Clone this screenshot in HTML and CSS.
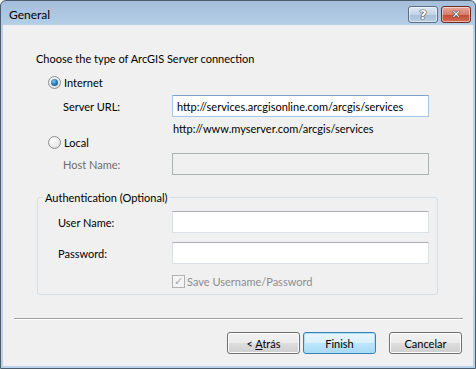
FILE: index.html
```html
<!DOCTYPE html>
<html lang="en">
<head>
    <meta charset="UTF-8">
    <title>General</title>
    <link rel="stylesheet" href="styles.css">
</head>
<body>

<div class="window">
    <div class="titlebar">
        <span class="title">General</span>
        <div class="caption-buttons">
            <button class="cap-btn help">?</button>
            <button class="cap-btn close">&#x2715;</button>
        </div>
    </div>

    <div class="client">
        <div class="page">
            <p class="intro">Choose the type of ArcGIS Server connection</p>

            <label class="radio-row first">
                <span class="radio checked"></span>
                <span>Internet</span>
            </label>
            <div class="field-row">
                <span class="field-label">Server URL:</span>
                <input class="textbox focused" type="text" value="http://services.arcgisonline.com/arcgis/services">
            </div>
            <div class="hint">http://www.myserver.com/arcgis/services</div>

            <label class="radio-row">
                <span class="radio"></span>
                <span>Local</span>
            </label>
            <div class="field-row host-row">
                <span class="field-label disabled">Host Name:</span>
                <input class="textbox" type="text" disabled>
            </div>

            <fieldset class="group">
                <legend>Authentication (Optional)</legend>
                <div class="field-row">
                    <span class="field-label">User Name:</span>
                    <input class="textbox" type="text">
                </div>
                <div class="field-row">
                    <span class="field-label">Password:</span>
                    <input class="textbox" type="password">
                </div>
                <div class="check-row">
                    <span class="checkbox">&#x2713;</span>
                    <span>Save Username/Password</span>
                </div>
            </fieldset>
        </div>

        <div class="separator"></div>

        <div class="buttons">
            <button class="btn">&lt; <u>A</u>trás</button>
            <button class="btn default">Finish</button>
            <button class="btn cancel">Cancelar</button>
        </div>
    </div>
</div>

</body>
</html>
```

FILE: styles.css
```css
body {
    margin: 0;
    font-family: Lato, "Open Sans", sans-serif;
    font-size: 11px;
    color: #000;
    background: #f0f0f0;
}

.window {
    width: 476px;
    height: 369px;
    box-sizing: border-box;
    border: 1px solid #4d5d6e;
    border-radius: 6px 6px 0 0;
    background: linear-gradient(#a4bedb, #bad2ea 30px, #b9d1ea);
    padding: 0 2px 2px 2px;
    display: flex;
    flex-direction: column;
}

.titlebar {
    height: 24px;
    display: flex;
    align-items: center;
    justify-content: space-between;
}

.title {
    margin-left: 6px;
    line-height: 15px;
    margin-top: 2px;
    font-size: 12px;
}

.caption-buttons {
    display: flex;
    gap: 3px;
    margin-right: 2px;
    margin-top: 2px;
}

.cap-btn {
    width: 30px;
    height: 17px;
    padding: 0;
    border: 1px solid #5b6e84;
    border-radius: 3px;
    font-family: "DejaVu Sans", sans-serif;
    font-weight: bold;
    color: #fff;
    line-height: 15px;
    box-shadow: inset 0 0 0 1px rgba(255, 255, 255, 0.5);
}

.help {
    background: linear-gradient(#dfe9f4, #c3d4e8 50%, #a9bfd8 51%, #b7cde3);
    font-size: 13px;
    text-shadow: 0 0 1px #333, 0 0 1px #333, 0 0 1px #333;
}

.close {
    border-color: #6b2a20;
    background: linear-gradient(#e4a99b, #d77e6a 50%, #c24b31 51%, #d36c52);
    font-size: 11px;
    text-shadow: 0 0 1px #222, 0 0 1px #222, 0 0 1px #222;
}

.client {
    flex: 1;
    background: #f0f0f0;
    padding: 0 10px 0 11px;
}

.page {
    padding-left: 22px;
}

.intro {
    margin: 26px 0 0 0;
    line-height: 15px;
}

.radio-row {
    display: flex;
    align-items: center;
    height: 14px;
    margin-left: 12px;
    gap: 3px;
    line-height: 15px;
}

.radio-row.first {
    margin-top: 9px;
}

.radio {
    width: 11px;
    height: 11px;
    border: 1px solid #8e8f8f;
    border-radius: 50%;
    background: radial-gradient(circle at 40% 35%, #ffffff, #e8e8e8 60%, #cfcfcf);
    position: relative;
    flex: none;
}

.radio.checked::after {
    content: "";
    position: absolute;
    left: 2px;
    top: 2px;
    width: 7px;
    height: 7px;
    border-radius: 50%;
    background: radial-gradient(circle at 40% 35%, #7ec6f0, #2a78b5 50%, #0d3f6e);
}

.field-row {
    display: flex;
    align-items: center;
    margin-top: 6px;
    margin-left: 27px;
}

.field-label {
    width: 109px;
    line-height: 15px;
}

.field-label.disabled {
    color: #6d6d6d;
}

.textbox {
    width: 257px;
    height: 22px;
    box-sizing: border-box;
    margin: 0;
    padding: 0 4px;
    border: 1px solid #dbdfe6;
    border-top-color: #abadb3;
    background: #fff;
    font-family: inherit;
    font-size: 11px;
    color: #000;
    outline: none;
}

.textbox.focused {
    border-color: #a9c6e4;
    border-top-color: #7da2ce;
}

.textbox:disabled {
    background: #f0f0f0;
    border-color: #adb2b5;
}

.hint {
    margin: 5px 0 0 137px;
    line-height: 13px;
    height: 13px;
}

.host-row {
    margin-top: 4px;
}

.group {
    width: 401px;
    box-sizing: border-box;
    margin: 15px 0 0 1px;
    padding: 6px 0 6px 5px;
    border: 1px solid #d5dfe5;
    border-radius: 3px;
}

.group legend {
    padding: 0 2px;
    line-height: 15px;
}

.group .field-row {
    margin-left: 15px;
    margin-top: 9px;
}

.group .field-label {
    width: 114px;
}

.group .field-row:first-of-type {
    margin-top: 0;
}

.check-row {
    display: flex;
    align-items: center;
    height: 13px;
    margin: 11px 0 0 129px;
    gap: 2px;
    color: #8d8d8d;
    line-height: 15px;
}

.checkbox {
    width: 11px;
    height: 11px;
    border: 1px solid #b1b1b1;
    background: #f4f4f4;
    color: #a8a8a8;
    font-family: "DejaVu Sans", sans-serif;
    font-size: 11px;
    line-height: 11px;
    text-align: center;
    flex: none;
}

.separator {
    margin-top: 23px;
    border-top: 1px solid #a0a0a0;
    border-bottom: 1px solid #ffffff;
}

.buttons {
    display: flex;
    justify-content: flex-end;
    gap: 3px;
    margin-top: 12px;
    margin-right: 1px;
}

.btn {
    width: 73px;
    height: 22px;
    padding: 0;
    border: 1px solid #707070;
    border-radius: 3px;
    background: linear-gradient(#f2f2f2, #ebebeb 50%, #dddddd 51%, #cfcfcf);
    box-shadow: inset 0 0 0 1px #fcfcfc;
    font-family: inherit;
    font-size: 11px;
    color: #000;
}

.btn.default {
    border-color: #3c7fb1;
    background: linear-gradient(#eaf6fd, #d9f0fc 50%, #bee6fd 51%, #a7d9f5);
    box-shadow: inset 0 0 0 1px #a9e0f9;
}

.btn.cancel {
    margin-left: 10px;
}
```
